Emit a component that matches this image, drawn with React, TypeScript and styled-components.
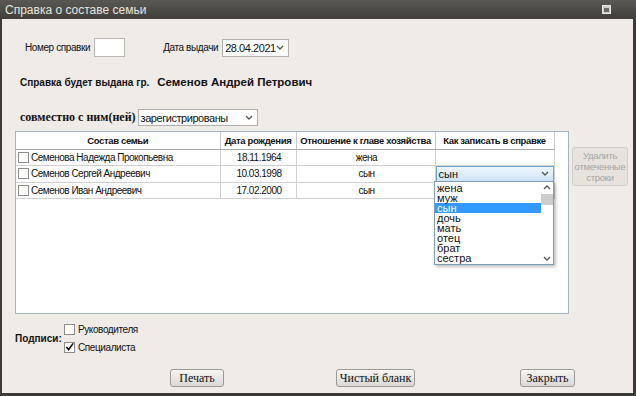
import styled, { createGlobalStyle } from 'styled-components';

const GlobalStyle = createGlobalStyle`
  html, body {
    margin: 0;
    padding: 0;
    background: #3c3b37;
    overflow: hidden;
  }
  * {
    box-sizing: border-box;
  }
`;

const Window = styled.div`
  width: 636px;
  height: 396px;
  display: flex;
  flex-direction: column;
  background: #3c3b37;
  font-family: 'Liberation Sans', Arial, sans-serif;
  font-size: 10px;
  letter-spacing: -0.4px;
  color: #111;
`;

const TitleBar = styled.div`
  height: 19px;
  flex: none;
  display: flex;
  align-items: center;
  justify-content: space-between;
  padding: 0 25px 0 5px;
  background: linear-gradient(#5a5852, #403f3b);
  color: #e8e5df;
  font-size: 12px;
  letter-spacing: 0;
`;

const CloseBox = styled.div`
  width: 9px;
  height: 9px;
  background: #cfcdc9;
  border: 1px solid #e9e8e6;
  display: flex;
  align-items: center;
  justify-content: center;

  &::after {
    content: '';
    width: 5px;
    height: 4px;
    background: #6a6864;
  }
`;

const Body = styled.div`
  flex: 1;
  margin: 0 3px 3px 2px;
  background: #efebe7;
  display: flex;
  flex-direction: column;
  padding-top: 19px;
`;

const Row = styled.div<{ $top?: number; $left?: number; $h?: number; $gap?: number }>`
  display: flex;
  align-items: center;
  margin-top: ${p => p.$top ?? 0}px;
  padding-left: ${p => p.$left ?? 0}px;
  height: ${p => p.$h ?? 18}px;
  gap: ${p => p.$gap ?? 0}px;
`;

const Field = styled.div`
  display: flex;
  align-items: center;
  gap: 4px;
`;

const TextInput = styled.div`
  width: 31px;
  height: 19px;
  background: #fff;
  border: 1px solid #b9b7b3;
`;

const Select = styled.div<{ $w: number; $h?: number }>`
  width: ${p => p.$w}px;
  height: ${p => p.$h ?? 18}px;
  background: #fff;
  border: 1px solid #b2b0ac;
  display: flex;
  align-items: center;
  justify-content: space-between;
  padding: 0 4px 0 2px;
  font-size: 11px;
  letter-spacing: -0.45px;
`;

const BoldLabel = styled.span<{ $size?: number }>`
  font-weight: bold;
  font-size: ${p => p.$size ?? 10}px;
  letter-spacing: 0;
`;

const SerifLabel = styled.span`
  font-family: 'Liberation Serif', 'Times New Roman', serif;
  font-weight: bold;
  font-size: 12px;
  letter-spacing: 0;
  margin-right: 2px;
`;

const TableArea = styled.div`
  display: flex;
  align-items: flex-start;
  gap: 3px;
  margin-top: 5px;
  padding-left: 13px;
`;

const TableBox = styled.div`
  position: relative;
  width: 554px;
  height: 183px;
  background: #fff;
  border: 1px solid #a3b3c6;
`;

const Grid = styled.table`
  border-collapse: collapse;
  table-layout: fixed;
  width: 538px;
`;

const HeadCell = styled.th<{ $w: number }>`
  width: ${p => p.$w}px;
  height: 17px;
  padding: 0;
  font-weight: bold;
  font-size: 9.5px;
  letter-spacing: -0.35px;
  text-align: center;
  border-right: 1px solid #c7c7c7;
  border-bottom: 1px solid #a9a9a9;
  white-space: nowrap;
  overflow: hidden;
`;

const Cell = styled.td<{ $align?: string }>`
  height: 16px;
  padding: 0 0 0 2px;
  text-align: ${p => p.$align ?? 'center'};
  letter-spacing: -0.5px;
  border-right: 1px solid #d0d0d0;
  border-bottom: 1px solid #d0d0d0;
  white-space: nowrap;
  overflow: hidden;
  vertical-align: middle;
`;

const NameWrap = styled.div`
  display: flex;
  align-items: center;
  gap: 2px;
`;

const Box = styled.span<{ $size?: number }>`
  width: ${p => p.$size ?? 11}px;
  height: ${p => p.$size ?? 11}px;
  flex: none;
  background: #fff;
  border: 1px solid #8e8c88;
  display: inline-flex;
  align-items: center;
  justify-content: center;
`;

const ActiveSelect = styled.div`
  height: 16px;
  margin: 0 0 0 -2px;
  border: 1px solid #6ea5d8;
  background: linear-gradient(#eef6fd, #cfe4f7);
  display: flex;
  align-items: center;
  justify-content: space-between;
  padding: 0 4px 0 2px;
  font-size: 11px;
  letter-spacing: 0;
`;

const DropList = styled.div`
  position: absolute;
  left: 418px;
  top: 49px;
  width: 120px;
  height: 84px;
  background: #fff;
  border: 1px solid #7f9db9;
  box-shadow: 2px 2px 3px rgba(0, 0, 0, 0.25);
  display: flex;
`;

const Options = styled.div`
  flex: 1;
  padding-top: 1px;
`;

const Option = styled.div<{ $selected?: boolean }>`
  height: 10px;
  line-height: 10px;
  padding-left: 2px;
  font-size: 11px;
  letter-spacing: 0;
  background: ${p => (p.$selected ? '#3399ff' : 'transparent')};
  color: ${p => (p.$selected ? '#fff' : '#111')};
`;

const ScrollBar = styled.div`
  width: 12px;
  display: flex;
  flex-direction: column;
  align-items: stretch;
  background: #fff;
`;

const ScrollArrow = styled.div`
  height: 11px;
  display: flex;
  align-items: center;
  justify-content: center;
`;

const ScrollTrack = styled.div`
  flex: 1;
  padding-top: 1px;
`;

const Thumb = styled.div`
  height: 11px;
  background: #cdcdcd;
`;

const SideButton = styled.div`
  margin-top: 16px;
  width: 56px;
  height: 39px;
  border: 1px solid #d2cec8;
  border-radius: 3px;
  background: #e6e3de;
  color: #a8a49e;
  font-size: 9.5px;
  letter-spacing: -0.3px;
  line-height: 11px;
  text-align: center;
  display: flex;
  align-items: center;
  justify-content: center;
`;

const Signatures = styled.div`
  display: flex;
  align-items: center;
  margin-top: 7px;
  padding-left: 13px;
`;

const SignLabel = styled.span`
  width: 49px;
  font-weight: bold;
  font-size: 10px;
  letter-spacing: 0;
`;

const CheckList = styled.div`
  display: flex;
  flex-direction: column;
  gap: 2px;
`;

const CheckRow = styled.div`
  height: 16px;
  display: flex;
  align-items: center;
  gap: 3px;
`;

const ButtonRow = styled.div`
  display: flex;
  margin-top: 14px;
  padding-left: 168px;
`;

const Button = styled.div<{ $w: number; $ml?: number }>`
  width: ${p => p.$w}px;
  height: 18px;
  margin-left: ${p => p.$ml ?? 0}px;
  border: 1px solid #9c9a95;
  border-radius: 3px;
  background: linear-gradient(#f7f6f4, #dad8d3);
  font-family: 'Liberation Serif', 'Times New Roman', serif;
  font-size: 12px;
  letter-spacing: 0;
  display: flex;
  align-items: center;
  justify-content: center;
`;

const Chevron = ({ up = false }: { up?: boolean }) => (
  <svg width="8" height="5" viewBox="0 0 8 5">
    <polyline
      points={up ? '1,4 4,1 7,4' : '1,1 4,4 7,1'}
      fill="none"
      stroke="#555"
      strokeWidth="1.3"
    />
  </svg>
);

const Tick = () => (
  <svg width="10" height="10" viewBox="0 0 10 10">
    <polyline points="1.5,5 4,8 9,1" fill="none" stroke="#111" strokeWidth="1.8" />
  </svg>
);

const people = [
  { name: 'Семенова Надежда Прокопьевна', born: '18.11.1964', rel: 'жена' },
  { name: 'Семенов Сергей Андреевич', born: '10.03.1998', rel: 'сын' },
  { name: 'Семенов Иван Андреевич', born: '17.02.2000', rel: 'сын' },
];

const options = ['жена', 'муж', 'сын', 'дочь', 'мать', 'отец', 'брат', 'сестра'];

export default function App() {
  return (
    <>
      <GlobalStyle />
      <Window>
        <TitleBar>
          <span>Справка о составе семьи</span>
          <CloseBox />
        </TitleBar>
        <Body>
          <Row $left={23} $h={19} $gap={38}>
            <Field>
              <span>Номер справки</span>
              <TextInput />
            </Field>
            <Field>
              <span>Дата выдачи</span>
              <Select $w={67}>
                <span>28.04.2021</span>
                <Chevron />
              </Select>
            </Field>
          </Row>
          <Row $top={16} $left={18} $gap={8}>
            <BoldLabel>Справка будет выдана гр.</BoldLabel>
            <BoldLabel $size={11.5}>Семенов Андрей Петрович</BoldLabel>
          </Row>
          <Row $top={18} $left={18} $h={17}>
            <SerifLabel>совместно с ним(ней)</SerifLabel>
            <Select $w={120} $h={17}>
              <span>зарегистрированы</span>
              <Chevron />
            </Select>
          </Row>
          <TableArea>
            <TableBox>
              <Grid>
                <thead>
                  <tr>
                    <HeadCell $w={204}>Состав семьи</HeadCell>
                    <HeadCell $w={76}>Дата рождения</HeadCell>
                    <HeadCell $w={139}>Отношение к главе хозяйства</HeadCell>
                    <HeadCell $w={119}>Как записать в справке</HeadCell>
                  </tr>
                </thead>
                <tbody>
                  {people.map((p, i) => (
                    <tr key={p.name}>
                      <Cell $align="left">
                        <NameWrap>
                          <Box $size={11} />
                          <span>{p.name}</span>
                        </NameWrap>
                      </Cell>
                      <Cell>{p.born}</Cell>
                      <Cell>{p.rel}</Cell>
                      <Cell $align="left">
                        {i === 1 && (
                          <ActiveSelect>
                            <span>сын</span>
                            <Chevron />
                          </ActiveSelect>
                        )}
                      </Cell>
                    </tr>
                  ))}
                </tbody>
              </Grid>
              <DropList>
                <Options>
                  {options.map(o => (
                    <Option key={o} $selected={o === 'сын'}>
                      {o}
                    </Option>
                  ))}
                </Options>
                <ScrollBar>
                  <ScrollArrow>
                    <Chevron up />
                  </ScrollArrow>
                  <ScrollTrack>
                    <Thumb />
                  </ScrollTrack>
                  <ScrollArrow>
                    <Chevron />
                  </ScrollArrow>
                </ScrollBar>
              </DropList>
            </TableBox>
            <SideButton>
              Удалить
              <br />
              отмеченные
              <br />
              строки
            </SideButton>
          </TableArea>
          <Signatures>
            <SignLabel>Подписи:</SignLabel>
            <CheckList>
              <CheckRow>
                <Box $size={11} />
                <span>Руководителя</span>
              </CheckRow>
              <CheckRow>
                <Box $size={11}>
                  <Tick />
                </Box>
                <span>Специалиста</span>
              </CheckRow>
            </CheckList>
          </Signatures>
          <ButtonRow>
            <Button $w={54}>Печать</Button>
            <Button $w={79} $ml={112}>
              Чистый бланк
            </Button>
            <Button $w={55} $ml={105}>
              Закрыть
            </Button>
          </ButtonRow>
        </Body>
      </Window>
    </>
  );
}
